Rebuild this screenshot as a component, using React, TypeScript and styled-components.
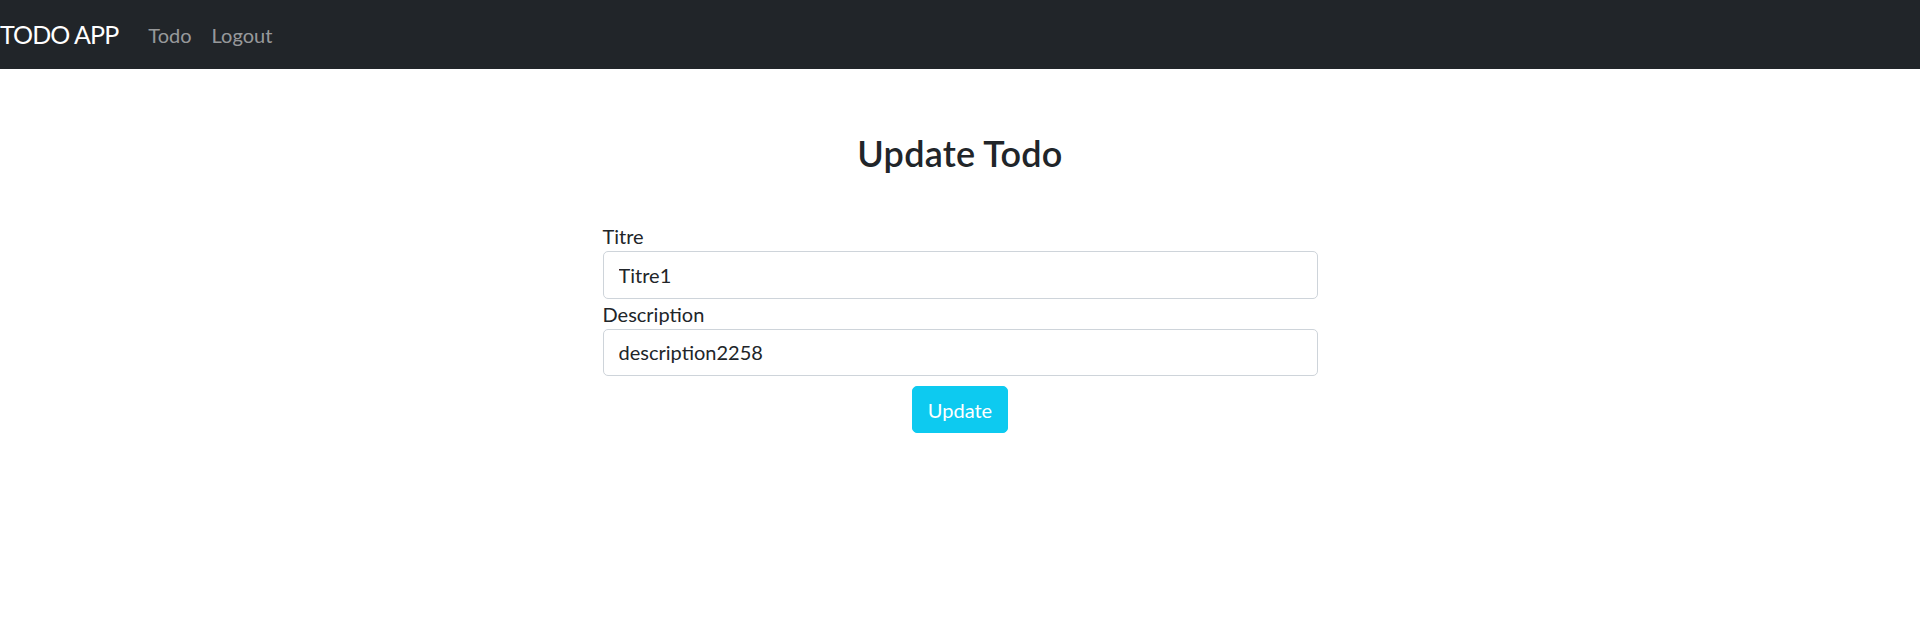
import React from "react";
import styled, { createGlobalStyle } from "styled-components";

const GlobalStyle = createGlobalStyle`
  *, *::before, *::after { box-sizing: border-box; }
  html, body { margin: 0; padding: 0; background: #fff; }
  body {
    font-family: Lato, "Segoe UI", "Liberation Sans", sans-serif;
    font-size: 20px;
    line-height: 1.5;
    color: #212529;
  }
`;

const Navbar = styled.nav`
  display: flex;
  align-items: center;
  height: 69px;
  background: #212529;
  padding: 10px 0;
`;

const Brand = styled.a`
  font-size: 25px;
  line-height: 37.5px;
  letter-spacing: -0.9px;
  color: #fff;
  margin-right: 20px;
  text-decoration: none;
  white-space: nowrap;
`;

const NavList = styled.div`
  display: flex;
  align-items: center;
`;

const NavLink = styled.a`
  color: rgba(255, 255, 255, 0.55);
  padding: 10px;
  text-decoration: none;
  font-size: 20px;
  line-height: 30px;
`;

const Main = styled.main`
  display: flex;
  flex-direction: column;
  align-items: center;
  padding-top: 63px;
`;

const Title = styled.h3`
  margin: 0 0 47px;
  font-size: 36px;
  font-weight: 600;
  line-height: 42px;
  letter-spacing: 0.2px;
`;

const Form = styled.form`
  width: 715px;
  display: flex;
  flex-direction: column;
`;

const Label = styled.label`
  display: block;
  font-size: 20px;
  line-height: 30px;
`;

const Input = styled.input`
  display: block;
  width: 100%;
  height: 47.5px;
  padding: 7.5px 15px;
  font: inherit;
  font-size: 20px;
  line-height: 30px;
  color: #212529;
  background: #fff;
  border: 1.25px solid #ced4da;
  border-radius: 5px;
  outline: none;
`;

const ButtonRow = styled.div`
  display: flex;
  justify-content: center;
  margin-top: 10px;
`;

const Button = styled.button`
  font: inherit;
  font-size: 20px;
  line-height: 30px;
  padding: 7.5px 15px;
  color: #fff;
  background: #0dcaf0;
  border: 1.25px solid #0dcaf0;
  border-radius: 5px;
  cursor: pointer;
`;

export default function App() {
  return (
    <>
      <GlobalStyle />
      <Navbar>
        <Brand href="#">TODO APP</Brand>
        <NavList>
          <NavLink href="#">Todo</NavLink>
          <NavLink href="#">Logout</NavLink>
        </NavList>
      </Navbar>
      <Main>
        <Title>Update Todo</Title>
        <Form onSubmit={(e) => e.preventDefault()}>
          <Label htmlFor="titre">Titre</Label>
          <Input id="titre" defaultValue="Titre1" />
          <Label htmlFor="desc">Description</Label>
          <Input id="desc" defaultValue="description2258" />
          <ButtonRow>
            <Button type="submit">Update</Button>
          </ButtonRow>
        </Form>
      </Main>
    </>
  );
}
